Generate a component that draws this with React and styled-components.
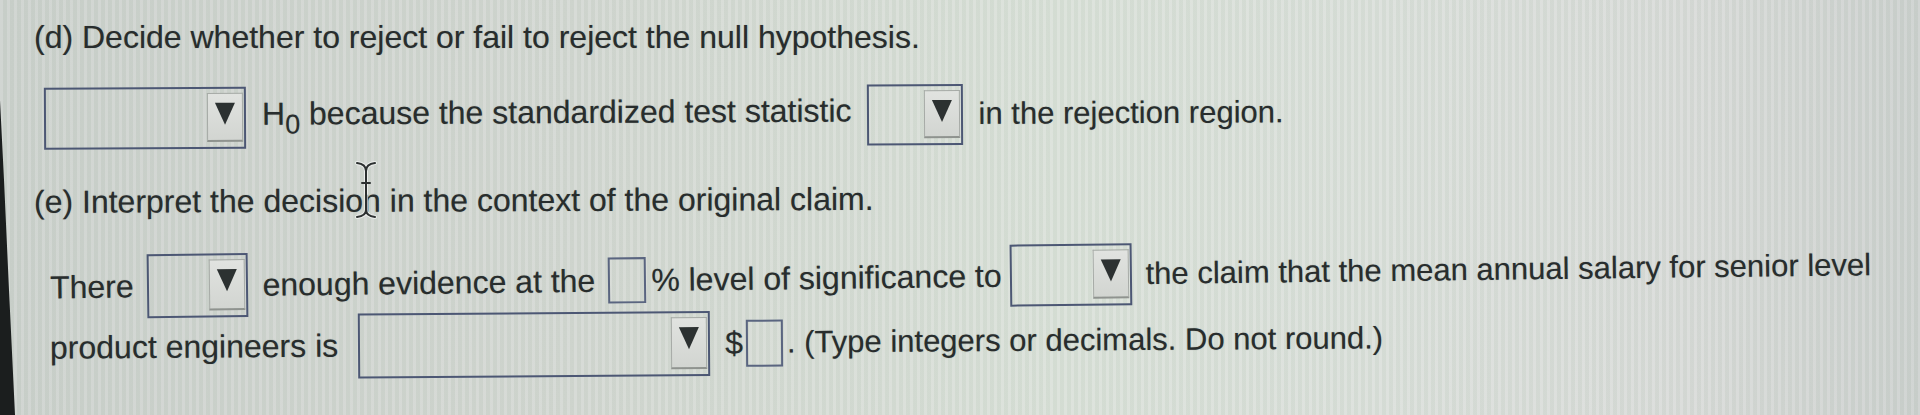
import styled, { createGlobalStyle } from "styled-components";

const GlobalStyle = createGlobalStyle`
  body {
    margin: 0;
    background: #d3d7d3;
  }
`;

const Page = styled.div`
  position: relative;
  width: 1920px;
  height: 415px;
  overflow: hidden;
  font-family: "Liberation Sans", Arial, sans-serif;
  font-size: 32px;
  color: #282d2d;
  background:
    repeating-linear-gradient(90deg, rgba(255, 255, 255, 0.1) 0 3px, rgba(110, 150, 110, 0.05) 3px 7px),
    linear-gradient(90deg, #ccd1cd 0%, #d3d7d2 30%, #d9e0d8 55%, #dadfda 72%, #d8dad8 88%, #ccd0ce 100%);
`;

const Sheet = styled.div`
  padding-top: 18px;
`;

const Line = styled.div`
  display: flex;
  align-items: center;
  height: ${(p) => p.$h}px;
  margin-top: ${(p) => p.$mt || 0}px;
  padding-left: ${(p) => p.$indent}px;
  white-space: pre;
  transform: rotate(${(p) => p.$tilt || 0}deg);
  transform-origin: 0 50%;
`;

const Words = styled.span`
  flex: none;
  margin-left: ${(p) => p.$ml || 0}px;
  font-size: ${(p) => p.$size || 32}px;
  text-shadow: 0 0 1px rgba(30, 35, 35, 0.35);
`;

const Sub = styled.span`
  font-size: 27px;
  vertical-align: -9px;
`;

const Select = styled.div`
  box-sizing: border-box;
  flex: none;
  width: ${(p) => p.$w}px;
  height: ${(p) => p.$h}px;
  margin-left: ${(p) => p.$ml || 0}px;
  border: 2px solid #4c5774;
  display: flex;
  justify-content: flex-end;
  padding: 4px 1px 5px 0;
`;

const ArrowButton = styled.div`
  box-sizing: border-box;
  width: 36px;
  border: 1px solid #a7aba7;
  border-bottom: 2px solid #8f938f;
  background: linear-gradient(#e1e3e0, #d2d5d1);
  display: flex;
  justify-content: center;
  padding-top: 9px;
`;

const Triangle = styled.div`
  width: 0;
  height: 0;
  border-left: 10px solid transparent;
  border-right: 10px solid transparent;
  border-top: 22px solid #2c3131;
`;

const Blank = styled.div`
  box-sizing: border-box;
  flex: none;
  width: ${(p) => p.$w}px;
  height: ${(p) => p.$h}px;
  margin-left: ${(p) => p.$ml || 0}px;
  border: 2px solid #5a6580;
`;

const Bezel = styled.div`
  position: absolute;
  left: 0;
  top: 0;
  width: 16px;
  height: 415px;
  background: #1b1e1e;
  clip-path: polygon(0 100px, 4px 180px, 9px 290px, 15px 415px, 0 415px);
`;

const Cursor = styled.svg`
  position: absolute;
  left: 354px;
  top: 160px;
`;

function Dropdown({ w, h, ml }) {
  return (
    <Select $w={w} $h={h} $ml={ml}>
      <ArrowButton>
        <Triangle />
      </ArrowButton>
    </Select>
  );
}

function TextCursor() {
  return (
    <Cursor width="24" height="60" viewBox="0 0 24 60">
      <g fill="none" stroke="#ffffff" strokeWidth="4" strokeLinecap="round" opacity="0.6">
        <path d="M3 3 Q12 4 12 11 Q12 4 21 3" />
        <path d="M12 11 V52" />
        <path d="M3 57 Q12 56 12 50 Q12 56 21 57" />
      </g>
      <g fill="none" stroke="#2c3030" strokeWidth="2" strokeLinecap="round">
        <path d="M3 3 Q12 4 12 11 Q12 4 21 3" />
        <path d="M12 11 V52" />
        <path d="M8 23 H16" />
        <path d="M3 57 Q12 56 12 50 Q12 56 21 57" />
      </g>
    </Cursor>
  );
}

export default function App() {
  return (
    <Page>
      <GlobalStyle />
      <Sheet>
        <Line $h={38} $indent={34}>
          <Words>(d) Decide whether to reject or fail to reject the null hypothesis.</Words>
        </Line>

        <Line $h={64} $mt={31} $indent={44} $tilt={-0.3}>
          <Dropdown w={202} h={62} />
          <Words $ml={16}>
            H<Sub>0</Sub> because the standardized test statistic
          </Words>
          <Dropdown w={96} h={61} ml={15} />
          <Words $ml={16} $size={31}>in the rejection region.</Words>
        </Line>

        <Line $h={38} $mt={32} $indent={34} $tilt={-0.2}>
          <Words>(e) Interpret the decision in the context of the original claim.</Words>
        </Line>

        <Line $h={60} $mt={37} $indent={50} $tilt={-0.7}>
          <Words>There</Words>
          <Dropdown w={101} h={64} ml={13} />
          <Words $ml={15}>enough evidence at the</Words>
          <Blank $w={38} $h={46} $ml={13} />
          <Words $ml={5}>% level of significance to</Words>
          <Dropdown w={122} h={62} ml={8} />
          <Words $ml={14} $size={31}>the claim that the mean annual salary for senior level</Words>
        </Line>

        <Line $h={60} $indent={50} $tilt={-0.4}>
          <Words>product engineers is</Words>
          <Dropdown w={352} h={65} ml={20} />
          <Words $ml={15}>$</Words>
          <Blank $w={37} $h={47} $ml={3} />
          <Words $ml={4} $size={31}>. (Type integers or decimals. Do not round.)</Words>
        </Line>
      </Sheet>
      <TextCursor />
      <Bezel />
    </Page>
  );
}
